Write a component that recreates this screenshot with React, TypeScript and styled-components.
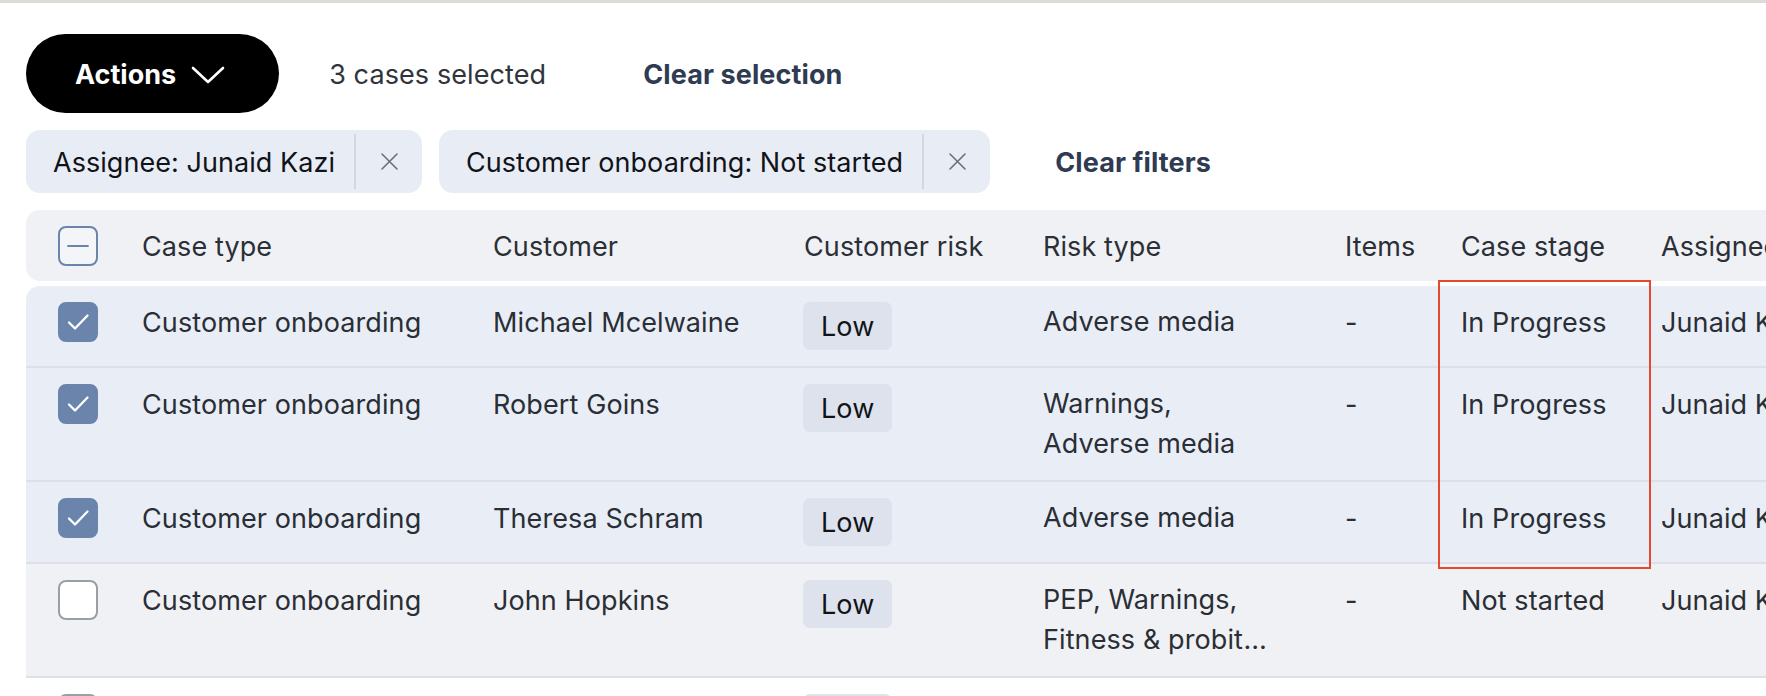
import styled, { createGlobalStyle } from 'styled-components'

const GlobalStyle = createGlobalStyle`
  html, body {
    margin: 0;
    padding: 0;
    background: #ffffff;
    overflow: hidden;
  }
  body {
    font-family: Inter, "Noto Sans", "Liberation Sans", sans-serif;
    color: #2a2e35;
  }
`

const COLUMNS = '116px 351px 311px 239px 302px 116px 200px 420px'

const Page = styled.div`
  border-top: 3px solid #dedbd6;
  padding: 31px 0 0 26px;
  height: 662px;
  overflow: hidden;
`

const Toolbar = styled.div`
  display: flex;
  align-items: center;
  height: 79px;
`

const ActionsButton = styled.button`
  display: flex;
  align-items: center;
  gap: 15px;
  box-sizing: border-box;
  height: 79px;
  padding: 2px 54px 0 49px;
  border: none;
  border-radius: 999px;
  background: #000000;
  color: #ffffff;
  font-family: inherit;
  font-size: 27px;
  font-weight: 700;
  cursor: pointer;
`

const SelectedCount = styled.span`
  margin-left: 50px;
  padding-top: 2px;
  font-size: 27px;
  letter-spacing: 0.1px;
  color: #30343b;
`

const LinkButton = styled.button<{ $offset: number }>`
  margin-left: ${({ $offset }) => $offset}px;
  padding: 2px 0 0;
  border: none;
  background: none;
  font-family: inherit;
  font-size: 27px;
  font-weight: 700;
  letter-spacing: 0.1px;
  color: #2f3b52;
  cursor: pointer;
`

const FilterRow = styled.div`
  display: flex;
  align-items: center;
  gap: 17px;
  margin-top: 17px;
`

const Chip = styled.div`
  display: flex;
  align-items: stretch;
  height: 63px;
  border-radius: 14px;
  background: #e8edf5;
`

const ChipLabel = styled.span`
  display: flex;
  align-items: center;
  padding: 2px 19px 0 27px;
  font-size: 27px;
  letter-spacing: 0.05px;
  color: #111318;
`

const ChipDivider = styled.span`
  width: 2px;
  margin: 4px 0;
  background: #d3d8e0;
`

const ChipRemove = styled.button`
  display: flex;
  align-items: center;
  justify-content: center;
  width: 66px;
  padding: 0;
  border: none;
  background: none;
  color: #6b7079;
  cursor: pointer;
`

const TableArea = styled.div`
  position: relative;
  margin-top: 17px;
`

const HeaderRow = styled.div`
  display: grid;
  grid-template-columns: ${COLUMNS};
  align-items: center;
  width: max-content;
  height: 71px;
  padding-top: 1px;
  box-sizing: border-box;
  border-radius: 14px;
  background: #f0f1f4;
  font-size: 27px;
  line-height: 40px;
  letter-spacing: 0.1px;
  color: #2b2f36;
  white-space: nowrap;
`

const Body = styled.div`
  margin-top: 5px;
  border-radius: 14px 0 0 0;
  overflow: hidden;
`

const Row = styled.div<{ $tone: 'selected' | 'hover' | 'plain' }>`
  display: grid;
  grid-template-columns: ${COLUMNS};
  align-items: start;
  width: max-content;
  padding: 16px 0;
  border-bottom: 2px solid #dde0e6;
  background: ${({ $tone }) =>
    $tone === 'selected' ? '#e9edf5' : $tone === 'hover' ? '#f0f1f4' : '#ffffff'};
  font-size: 27px;
  line-height: 40px;
  letter-spacing: 0.1px;
  color: #2a2e35;
`

const SelectCell = styled.div`
  display: flex;
  padding-left: 32px;
`

const Cell = styled.div`
  padding-top: 1px;
  white-space: nowrap;
`

const ClampCell = styled.div`
  width: 230px;
  display: -webkit-box;
  -webkit-box-orient: vertical;
  -webkit-line-clamp: 2;
  overflow: hidden;
`

const Badge = styled.span`
  display: inline-flex;
  align-items: center;
  box-sizing: border-box;
  height: 48px;
  padding: 2px 18px 0;
  margin: -1px 0 0 -1px;
  border-radius: 7px;
  background: #dde2ed;
  color: #111318;
`

const Box = styled.span<{ $state: 'checked' | 'indeterminate' | 'unchecked' }>`
  display: flex;
  align-items: center;
  justify-content: center;
  box-sizing: border-box;
  width: 40px;
  height: 40px;
  border-radius: 8px;
  border: 2px solid
    ${({ $state }) => ($state === 'unchecked' ? '#9a9ea6' : '#6a84ab')};
  background: ${({ $state }) =>
    $state === 'checked' ? '#6a84ab' : $state === 'indeterminate' ? '#f4f5f8' : '#ffffff'};
`

const Highlight = styled.div`
  position: absolute;
  left: 1412px;
  top: 70px;
  width: 213px;
  height: 289px;
  box-sizing: border-box;
  border: 2px solid #e5472f;
  pointer-events: none;
`

type BoxState = 'checked' | 'indeterminate' | 'unchecked'

function Checkbox({ state }: { state: BoxState }) {
  return (
    <Box $state={state}>
      {state === 'checked' && (
        <svg width="28" height="28" viewBox="0 0 28 28" fill="none">
          <path d="M5 14.5l6 6L23.5 7.5" stroke="#ffffff" strokeWidth="2.3" strokeLinecap="round" strokeLinejoin="round" />
        </svg>
      )}
      {state === 'indeterminate' && (
        <svg width="22" height="4" viewBox="0 0 22 4">
          <path d="M1 2h20" stroke="#6a84ab" strokeWidth="1.8" strokeLinecap="round" />
        </svg>
      )}
    </Box>
  )
}

function CloseIcon() {
  return (
    <svg width="19" height="19" viewBox="0 0 19 19" fill="none">
      <path d="M2 2l15 15M17 2L2 17" stroke="currentColor" strokeWidth="1.6" strokeLinecap="round" />
    </svg>
  )
}

const cases = [
  { name: 'Michael Mcelwaine', risk: 'Adverse media', stage: 'In Progress', state: 'checked' as BoxState, tone: 'selected' as const },
  { name: 'Robert Goins', risk: 'Warnings, Adverse media', stage: 'In Progress', state: 'checked' as BoxState, tone: 'selected' as const },
  { name: 'Theresa Schram', risk: 'Adverse media', stage: 'In Progress', state: 'checked' as BoxState, tone: 'selected' as const },
  { name: 'John Hopkins', risk: 'PEP, Warnings, Fitness & probity, Sanctions', stage: 'Not started', state: 'unchecked' as BoxState, tone: 'hover' as const },
  { name: 'Sarah Whitfield', risk: 'Sanctions', stage: 'Not started', state: 'unchecked' as BoxState, tone: 'plain' as const },
]

export default function App() {
  return (
    <>
      <GlobalStyle />
      <Page>
        <Toolbar>
          <ActionsButton>
            Actions
            <svg width="34" height="18" viewBox="0 0 34 18" fill="none">
              <path d="M2 2l15 14L32 2" stroke="#ffffff" strokeWidth="2.6" strokeLinecap="round" strokeLinejoin="round" />
            </svg>
          </ActionsButton>
          <SelectedCount>3 cases selected</SelectedCount>
          <LinkButton $offset={97}>Clear selection</LinkButton>
        </Toolbar>

        <FilterRow>
          <Chip>
            <ChipLabel>Assignee: Junaid Kazi</ChipLabel>
            <ChipDivider />
            <ChipRemove aria-label="Remove filter">
              <CloseIcon />
            </ChipRemove>
          </Chip>
          <Chip>
            <ChipLabel>Customer onboarding: Not started</ChipLabel>
            <ChipDivider />
            <ChipRemove aria-label="Remove filter">
              <CloseIcon />
            </ChipRemove>
          </Chip>
          <LinkButton $offset={48}>Clear filters</LinkButton>
        </FilterRow>

        <TableArea>
          <HeaderRow>
            <SelectCell>
              <Checkbox state="indeterminate" />
            </SelectCell>
            <Cell>Case type</Cell>
            <Cell>Customer</Cell>
            <Cell>Customer risk</Cell>
            <Cell>Risk type</Cell>
            <Cell>Items</Cell>
            <Cell>Case stage</Cell>
            <Cell>Assignee</Cell>
          </HeaderRow>
          <Body>
            {cases.map((c) => (
              <Row key={c.name} $tone={c.tone}>
                <SelectCell>
                  <Checkbox state={c.state} />
                </SelectCell>
                <Cell>Customer onboarding</Cell>
                <Cell>{c.name}</Cell>
                <Cell>
                  <Badge>Low</Badge>
                </Cell>
                <ClampCell>{c.risk}</ClampCell>
                <Cell>-</Cell>
                <Cell>{c.stage}</Cell>
                <Cell>Junaid Kazi</Cell>
              </Row>
            ))}
          </Body>
          <Highlight />
        </TableArea>
      </Page>
    </>
  )
}
